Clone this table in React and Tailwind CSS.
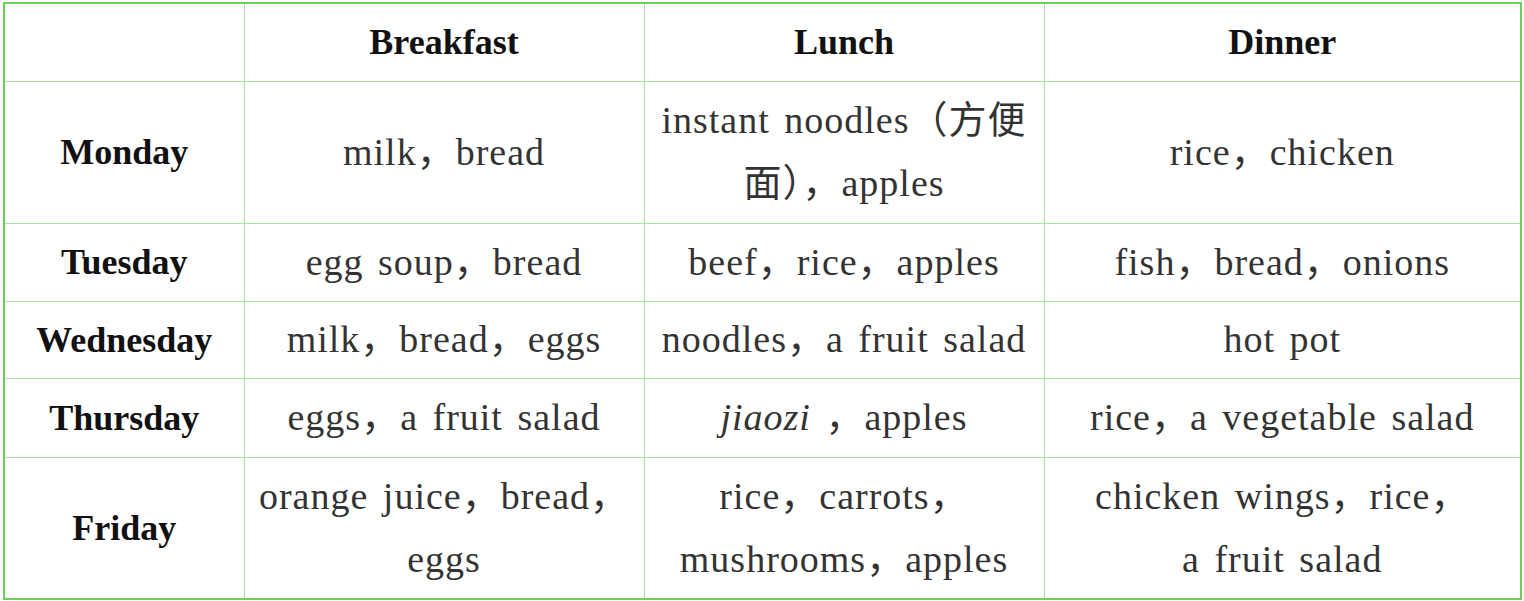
import React from "react";

const serif = { fontFamily: '"Liberation Serif", "Noto Sans CJK SC", serif' };

const rows = [
  {
    day: "Monday",
    h: "h-[142px]",
    cells: [
      <>milk，bread</>,
      <>instant noodles（方便<br />面），apples</>,
      <>rice，chicken</>,
    ],
  },
  {
    day: "Tuesday",
    h: "h-[78px]",
    cells: [<>egg soup，bread</>, <>beef，rice，apples</>, <>fish，bread，onions</>],
  },
  {
    day: "Wednesday",
    h: "h-[77px]",
    cells: [<>milk，bread，eggs</>, <>noodles，a fruit salad</>, <>hot pot</>],
  },
  {
    day: "Thursday",
    h: "h-[79px]",
    cells: [
      <>eggs，a fruit salad</>,
      <><i>jiaozi</i> ，apples</>,
      <>rice，a vegetable salad</>,
    ],
  },
  {
    day: "Friday",
    h: "h-[142px]",
    cells: [
      <>orange juice，bread，<br />eggs</>,
      <>rice，carrots，<br />mushrooms，apples</>,
      <>chicken wings，rice，<br />a fruit salad</>,
    ],
  },
];

export default function App() {
  return (
    <div className="w-[1524px] h-[601px] bg-white pl-[3px] pt-[2px]" style={serif}>
      <table className="border-collapse border-2 border-[#6ccf5c] table-fixed w-[1517px]">
        <colgroup>
          <col className="w-[240px]" />
          <col className="w-[400px]" />
          <col className="w-[400px]" />
          <col className="w-[477px]" />
        </colgroup>
        <thead>
          <tr className="h-[78px]">
            <th className="border border-[#a8e39b]"></th>
            {["Breakfast", "Lunch", "Dinner"].map((t) => (
              <th key={t} className="border border-[#a8e39b] text-[36px] font-bold text-[#111] text-center">
                {t}
              </th>
            ))}
          </tr>
        </thead>
        <tbody>
          {rows.map((r) => (
            <tr key={r.day} className={r.h}>
              <td className="border border-[#a8e39b] text-[36px] font-bold text-[#111] text-center leading-[40px]">
                {r.day}
              </td>
              {r.cells.map((c, i) => (
                <td
                  key={i}
                  className="border border-[#a8e39b] text-[38px] tracking-[1px] [word-spacing:4px] text-[#333] text-center leading-[63px] whitespace-nowrap p-0"
                >
                  {c}
                </td>
              ))}
            </tr>
          ))}
        </tbody>
      </table>
    </div>
  );
}
